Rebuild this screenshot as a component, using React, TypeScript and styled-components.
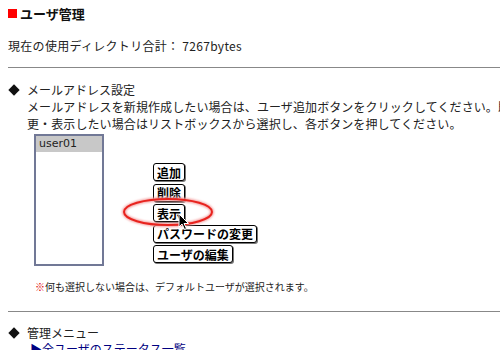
import React from "react";
import styled, { createGlobalStyle } from "styled-components";

const GlobalStyle = createGlobalStyle`
  html, body {
    margin: 0;
    padding: 0;
    background: #fff;
    overflow: hidden;
  }
  body {
    font-family: "Noto Sans CJK JP", "DejaVu Sans", sans-serif;
    font-size: 12px;
    color: #222;
  }
`;

const Page = styled.div`
  width: 500px;
  height: 350px;
  overflow: hidden;
  padding: 7px 0 0 8px;
  box-sizing: border-box;
`;

const Title = styled.h1`
  display: flex;
  align-items: center;
  gap: 3px;
  margin: 0;
  font-size: 13px;
  line-height: 13px;
  font-weight: bold;
  color: #111;
`;

const RedSquare = styled.span`
  width: 9px;
  height: 9px;
  background: #ff0000;
`;

const Usage = styled.p`
  margin: 19px 0 0;
  line-height: 14px;
  letter-spacing: 0.3px;
`;

const Rule = styled.div<{ $top: number }>`
  height: 1px;
  background: #888;
  margin: ${(p) => p.$top}px 0 0;
  width: 500px;
`;

const SectionHead = styled.div<{ $top: number }>`
  display: flex;
  align-items: center;
  margin-top: ${(p) => p.$top}px;
  line-height: 17px;
  white-space: nowrap;
`;

const Diamond = styled.span`
  width: 8px;
  height: 8px;
  background: #111;
  transform: rotate(45deg);
  margin: 0 9px 0 2px;
`;

const Body = styled.div`
  padding-left: 19px;
  line-height: 17px;
  white-space: nowrap;
  letter-spacing: 0.1px;
`;

const FormRow = styled.div`
  display: flex;
  align-items: flex-end;
  padding-left: 26px;
  margin-top: 2px;
`;

const ListBox = styled.div`
  width: 66px;
  height: 128px;
  border: 2px solid #717896;
  background: #fff;
`;

const ListItem = styled.div<{ $selected?: boolean }>`
  height: 16px;
  line-height: 16px;
  padding-left: 3px;
  font-family: "DejaVu Sans", sans-serif;
  font-size: 11px;
  background: ${(p) => (p.$selected ? "#c8c8c8" : "transparent")};
`;

const ButtonColumn = styled.div`
  position: relative;
  display: flex;
  flex-direction: column;
  align-items: flex-start;
  gap: 2.5px;
  margin-left: 49px;
  margin-bottom: 3px;
`;

const Button = styled.button`
  height: 18px;
  padding: 0 3px;
  border: 1px solid #000;
  border-radius: 3px;
  background: #fff;
  box-shadow: 1px 1px 0 #777;
  font-family: "Noto Sans CJK JP", sans-serif;
  font-size: 12px;
  font-weight: bold;
  line-height: 15px;
  color: #000;
  cursor: default;
`;

const Ellipse = styled.svg`
  position: absolute;
  left: -30px;
  top: 34px;
  overflow: visible;
  pointer-events: none;
`;

const Cursor = styled.svg`
  position: absolute;
  left: 25px;
  top: 50px;
  pointer-events: none;
`;

const Note = styled.p`
  margin: 15px 0 0 27px;
  font-size: 10px;
  line-height: 12px;
  white-space: nowrap;
`;

const Mark = styled.span`
  color: #e00000;
`;

const MenuLink = styled.a`
  display: block;
  padding-left: 22px;
  line-height: 16px;
  color: #000080;
  text-decoration: none;
  white-space: nowrap;
`;

const buttons = ["追加", "削除", "表示", "パスワードの変更", "ユーザの編集"];

export default function App() {
  return (
    <Page>
      <GlobalStyle />
      <Title>
        <RedSquare />
        ユーザ管理
      </Title>
      <Usage>現在の使用ディレクトリ合計： 7267bytes</Usage>
      <Rule $top={14} />

      <SectionHead $top={13}>
        <Diamond />
        メールアドレス設定
      </SectionHead>
      <Body>
        メールアドレスを新規作成したい場合は、ユーザ追加ボタンをクリックしてください。既存のアドレスを削除・変
        <br />
        更・表示したい場合はリストボックスから選択し、各ボタンを押してください。
      </Body>

      <FormRow>
        <ListBox>
          <ListItem $selected>user01</ListItem>
        </ListBox>
        <ButtonColumn>
          {buttons.map((label) => (
            <Button key={label}>{label}</Button>
          ))}
          <Ellipse width="90" height="30" viewBox="0 0 90 30">
            <defs>
              <filter id="glow" x="-20%" y="-40%" width="140%" height="180%">
                <feGaussianBlur stdDeviation="1.2" />
              </filter>
            </defs>
            <ellipse cx="45" cy="15" rx="44" ry="13" fill="none" stroke="#f4a0a0" strokeWidth="4" filter="url(#glow)" />
            <ellipse cx="45" cy="15" rx="44" ry="13" fill="none" stroke="#e8231e" strokeWidth="2" />
          </Ellipse>
          <Cursor width="12" height="18" viewBox="0 0 12 18">
            <path d="M1 1 L1 14 L4 11 L6.5 16.5 L8.5 15.5 L6 10.5 L10.5 10.5 Z" fill="#000" stroke="#fff" strokeWidth="1" strokeLinejoin="round" />
          </Cursor>
        </ButtonColumn>
      </FormRow>

      <Note>
        <Mark>※</Mark>何も選択しない場合は、デフォルトユーザが選択されます。
      </Note>
      <Rule $top={18} />

      <SectionHead $top={12}>
        <Diamond />
        管理メニュー
      </SectionHead>
      <MenuLink href="#">▶全ユーザのステータス一覧</MenuLink>
    </Page>
  );
}
